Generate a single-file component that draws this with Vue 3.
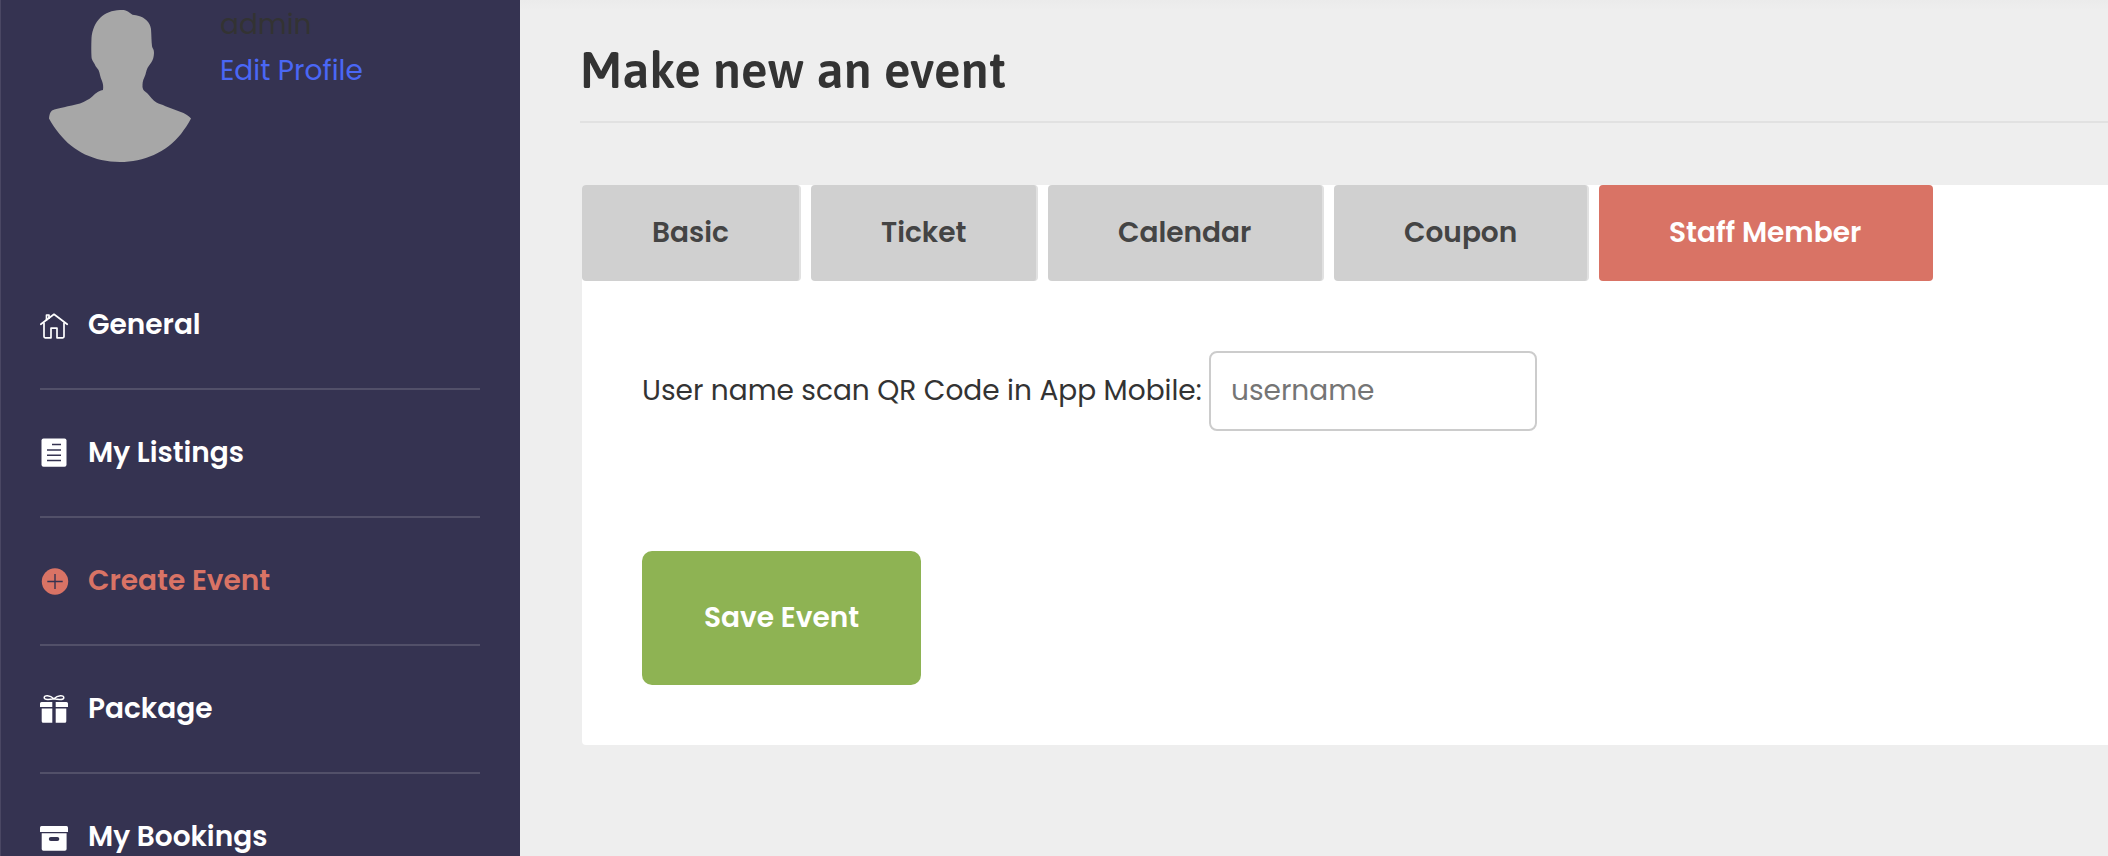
<template>
  <div class="dashboard">
    <aside class="sidebar">
      <div class="profile">
        <svg class="avatar" viewBox="48 8 144 156" fill="#a7a7a7">
          <path d="M120 10C126 9.5 128.500 11.500 131 13.800C133 15.500 135 15 138 15.700C145 17.500 150 22 151 29C151.500 36 151.400 41 152 46C152.300 48.500 154 48.500 154 53C153.800 61 150 64 147.500 68C146 71 146 74 144.500 77C142.500 81 142.500 83 142.500 87C143 91 145.500 91.500 147.500 93.500C150.500 96.500 153 100.500 156.500 102.500C159 104 162 104.500 165.500 106.200L183.500 113C187.500 115 189 116.500 191 118.500C188 124.500 184.500 129 181 134C166 152.500 144 162 120 162C94 162 73 151 59.500 134C55 128.500 52 124 49 118.500C49.300 115 50 112 52 110.500C58 108 69 106.500 80 103.500C85 101.500 89 99.500 92 96.800C95 94 97 91.500 103 90C103.500 86 103 83.500 102 81C100 77 100 73 98.500 70L95.500 66C94.500 62.500 91.800 61 91.500 57C91.200 51 91.200 45 91.500 38C93 21 104 10.500 120 10Z" />
        </svg>
        <div class="profile-text">
          <span class="profile-name">admin</span>
          <a class="profile-link">Edit Profile</a>
        </div>
      </div>

      <nav class="menu">
        <a
          v-for="item in menu"
          :key="item.icon"
          class="menu-item"
          :class="{ 'is-active': item.icon === 'create' }"
        >
          <svg class="menu-icon" viewBox="0 -3 29 32" fill="currentColor">
            <g v-if="item.icon === 'general'" fill="none" stroke="currentColor" stroke-width="1.7" stroke-linejoin="round" stroke-linecap="round">
              <path d="M.8 12.300L14 2.300L27.200 12.300" />
              <path d="M6.500 8V3H9V6.200" />
              <path d="M4 11V24.500Q4 25.800 5.200 25.800H11V16.200H17V25.800H22.800Q24 25.800 24 24.500V11" />
            </g>
            <g v-else-if="item.icon === 'listings'">
              <rect x="1.500" y="-1.500" width="25" height="28.300" rx="2" />
              <path d="M12 4.600H21M7 10H21M7 15.300H21M7 20.600H21" fill="none" stroke="#353351" stroke-width="1.500" />
            </g>
            <g v-else-if="item.icon === 'create'">
              <circle cx="15" cy="13.500" r="13.200" />
              <path d="M7.300 13.500H22.700M15 6V21" fill="none" stroke="#353351" stroke-width="1.400" />
            </g>
            <g v-else-if="item.icon === 'package'">
              <path d="M1.500 6H12.300V11H0V7.500Q0 6 1.500 6ZM15.700 6H26.500Q28 6 28 7.500V11H15.700Z" />
              <path d="M1.700 12.400H12.300V26.700H3.200Q1.700 26.700 1.700 25.200ZM15.700 12.400H26.300V25.200Q26.300 26.700 24.800 26.700H15.700Z" />
              <path d="M13.900 2.800C10-.8 4-1.200 4.200 1.800C4.400 4.300 10 3.700 13.900 2.800C17.800 3.700 23.500 4.300 23.800 1.800C24-1.200 17.800-.8 13.900 2.800Z" fill="none" stroke="currentColor" stroke-width="1.500" />
            </g>
            <g v-else>
              <path d="M1.500 2H26.500Q28 2 28 3.500V8H0V3.500Q0 2 1.500 2Z" />
              <path d="M1.700 9.200H26.600V25Q26.600 26.700 24.900 26.700H3.400Q1.700 26.700 1.700 25Z" />
              <rect x="8.800" y="13" width="10.500" height="4" rx="2" fill="#353351" />
            </g>
          </svg>
          <span class="menu-label">{{ item.label }}</span>
        </a>
      </nav>
    </aside>

    <main class="content">
      <h1 class="title">Make new an event</h1>
      <section class="card">
        <div class="tabs">
          <button
            v-for="tab in tabs"
            :key="tab.id"
            class="tab"
            :class="['tab-' + tab.id, { 'is-active': activeTab === tab.id }]"
            @click="activeTab = tab.id"
          >
            {{ tab.label }}
          </button>
        </div>
        <div class="field">
          <label class="field-label" for="username">User name scan QR Code in App Mobile:</label>
          <input id="username" v-model="username" class="field-input" type="text" placeholder="username">
        </div>
        <button class="save">Save Event</button>
      </section>
    </main>
  </div>
</template>

<script setup>
import { ref } from 'vue'

const activeTab = ref('staff')
const username = ref('')

const menu = [
  { icon: 'general', label: 'General' },
  { icon: 'listings', label: 'My Listings' },
  { icon: 'create', label: 'Create Event' },
  { icon: 'package', label: 'Package' },
  { icon: 'bookings', label: 'My Bookings' }
]

const tabs = [
  { id: 'basic', label: 'Basic' },
  { id: 'ticket', label: 'Ticket' },
  { id: 'calendar', label: 'Calendar' },
  { id: 'coupon', label: 'Coupon' },
  { id: 'staff', label: 'Staff Member' }
]
</script>

<style>
body {
  margin: 0;
  overflow: hidden;
}
</style>

<style scoped>
.dashboard {
  display: flex;
  height: 856px;
  overflow: hidden;
  background: #eee;
  color: #333;
  font-family: Poppins, Inter, sans-serif;
  font-size: 28px;
  white-space: nowrap;
}

.dashboard * {
  box-sizing: border-box;
}

.sidebar {
  flex: 0 0 520px;
  background: #353351;
  border-left: 1px solid #4a4763;
}

.profile {
  display: flex;
  height: 262px;
  padding: 8px 0 0 47px;
  gap: 28px;
}

.avatar {
  width: 144px;
  height: 156px;
}

.profile-text {
  display: flex;
  flex-direction: column;
  margin-top: -6px;
  line-height: 46px;
}

.profile-link {
  color: #4a67f5;
}

.menu {
  padding: 0 40px 0 39px;
}

.menu-item {
  display: flex;
  align-items: center;
  height: 128px;
  gap: 19px;
  border-bottom: 2px solid #525069;
  color: #fff;
  font-weight: 600;
}

.menu-item.is-active {
  color: #d97365;
}

.menu-icon {
  width: 29px;
  height: 32px;
}

.menu-label {
  line-height: 46px;
}

.content {
  flex: 1;
  min-width: 0;
  padding-left: 60px;
  background: linear-gradient(#ebebeb, #eee 10px);
}

.title {
  height: 123px;
  margin: 0;
  padding: 35px 0 0;
  border-bottom: 2px solid #e1e1e1;
  font-family: Asap, "Open Sans", sans-serif;
  font-size: 50px;
  font-weight: 600;
  line-height: 70px;
}

.card {
  height: 560px;
  margin: 62px 0 0 2px;
  background: #fff;
  border-radius: 4px 0 0 4px;
}

.tabs {
  display: flex;
  gap: 10px;
}

.tab {
  height: 96px;
  padding: 0 0 0 70px;
  border: 0;
  border-right: 2px solid #e1e1e1;
  border-radius: 4px;
  background: #d0d0d0;
  color: #444;
  font: inherit;
  font-weight: 600;
  text-align: left;
  cursor: pointer;
}

.tab.is-active {
  border-right: 0;
  background: #d97365;
  color: #fff;
}

.tab-basic { width: 219px; }
.tab-ticket { width: 227px; }
.tab-calendar { width: 276px; }
.tab-coupon { width: 255px; }
.tab-staff { width: 334px; }

.field {
  display: flex;
  align-items: center;
  margin: 70px 0 0 60px;
}

.field-label {
  width: 567px;
}

.field-input {
  width: 328px;
  height: 80px;
  padding: 0 20px;
  border: 2px solid #ccc;
  border-radius: 8px;
  background: #fff;
  font: inherit;
  outline: none;
}

.field-input::placeholder {
  color: #757575;
}

.save {
  display: block;
  width: 279px;
  height: 134px;
  margin: 120px 0 0 60px;
  padding: 0 0 0 62px;
  border: 0;
  border-radius: 10px;
  background: #8eb353;
  color: #fff;
  font: inherit;
  font-weight: 600;
  text-align: left;
  cursor: pointer;
}
</style>
